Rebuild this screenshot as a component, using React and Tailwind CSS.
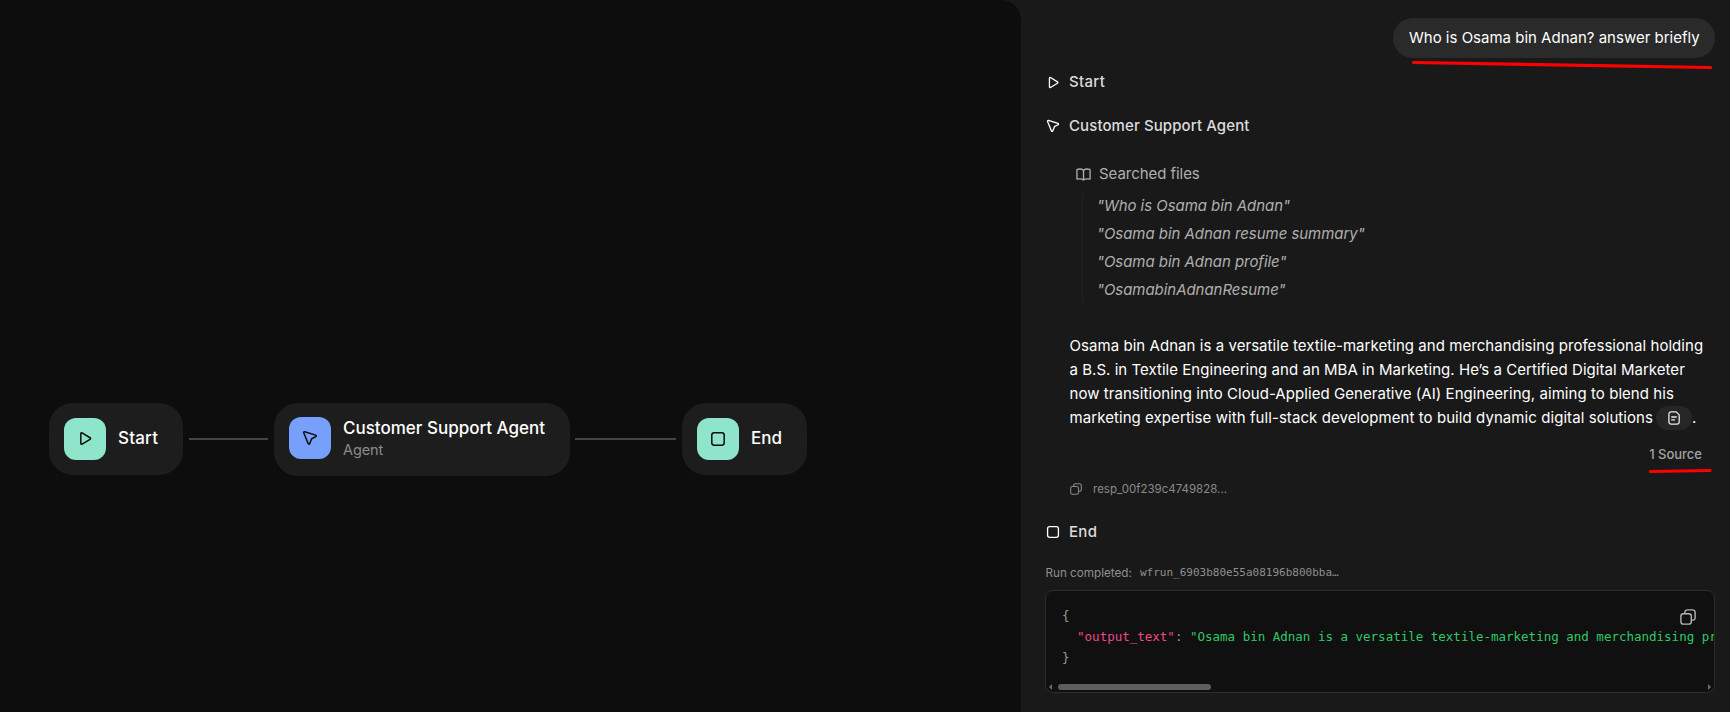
import React from "react";

function PlayIcon({ className }) {
  return (
    <svg viewBox="0 0 16 16" fill="none" stroke="currentColor" strokeWidth="1.6" strokeLinejoin="round" className={className}>
      <path d="M3 2.700v10.600a.9.9 0 0 0 1.300.8l8.600-5.200a1 1 0 0 0 0-1.700l-8.600-5.300a.9.9 0 0 0-1.300.8Z" />
    </svg>
  );
}

function CursorIcon({ className }) {
  return (
    <svg viewBox="0 0 16 16" fill="none" stroke="currentColor" strokeWidth="1.5" strokeLinejoin="round" className={className}>
      <path d="M2.700 1.700l11 3.400a.8.8 0 0 1 .1 1.500L10.100 8.500a1.600 1.600 0 0 0-.7.8l-1.700 4.300a.8.8 0 0 1-1.500 0L1.700 2.700a.8.8 0 0 1 1-1Z" />
    </svg>
  );
}

function SquareIcon({ className }) {
  return (
    <svg viewBox="0 0 16 16" fill="none" stroke="currentColor" strokeWidth="1.5" className={className}>
      <rect x="1.8" y="1.8" width="12.4" height="12.4" rx="2.4" />
    </svg>
  );
}

function BookIcon({ className }) {
  return (
    <svg viewBox="0 0 16 16" fill="none" stroke="currentColor" strokeWidth="1.4" strokeLinejoin="round" className={className}>
      <path d="M8 3.4C6.2 2.1 3.6 1.9 1.4 2.5c-.2.1-.4.3-.4.5v9.5c0 .4.3.6.7.5 2.1-.5 4.6-.3 6.3.9 1.700-1.200 4.200-1.400 6.300-.9.4.1.7-.1.7-.5V3c0-.2-.2-.4-.4-.5C12.400 1.900 9.800 2.100 8 3.400Z" />
      <path d="M8 3.400v10.500" />
    </svg>
  );
}

function CopyIcon({ className }) {
  return (
    <svg viewBox="0 0 16 16" fill="none" stroke="currentColor" strokeWidth="1.4" className={className}>
      <rect x="0.9" y="4.700" width="10.400" height="10.400" rx="2.400" />
      <path d="M4.900 4.500V3.300a2.400 2.400 0 0 1 2.400-2.400h5.400a2.400 2.400 0 0 1 2.400 2.400v5.400a2.400 2.400 0 0 1-2.400 2.400h-1.200" />
    </svg>
  );
}

function FileIcon({ className }) {
  return (
    <svg viewBox="0 0 12 14" fill="none" stroke="currentColor" strokeWidth="1.300" strokeLinecap="round" strokeLinejoin="round" className={className}>
      <path d="M3 .9h5.200L11.200 3.900V11a2.100 2.100 0 0 1-2.100 2.100H3A2.100 2.100 0 0 1 .9 11V3A2.100 2.100 0 0 1 3 .9Z" />
      <path d="M3.700 6h4.600M3.700 8.900h2.800" />
    </svg>
  );
}

function Node({ tone, icon, title, subtitle, className }) {
  return (
    <div className={`flex shrink-0 items-center rounded-[24px] bg-[#1d1d1d] pl-[15px] ${className}`}>
      <div className={`flex size-[42px] shrink-0 items-center justify-center rounded-[12px] text-[#0d0d0d] ${tone}`}>{icon}</div>
      <div className="ml-3 flex flex-col whitespace-nowrap">
        <span className="text-[17px] leading-[23px] font-medium text-white">{title}</span>
        {subtitle && <span className="text-[14.5px] leading-[20px] tracking-[-0.1px] text-[#8a8a8a]">{subtitle}</span>}
      </div>
    </div>
  );
}

function Edge({ className }) {
  return <div className={`mt-[35px] h-[2px] shrink-0 bg-[#444444] ${className}`} />;
}

function Step({ icon, label, className }) {
  return (
    <div className={`flex h-6 items-center gap-2 text-[15px] font-medium text-[#dcdcdc] ${className}`}>
      <span className="flex size-4 items-center justify-center text-white">{icon}</span>
      {label}
    </div>
  );
}

const queries = [
  "Who is Osama bin Adnan",
  "Osama bin Adnan resume summary",
  "Osama bin Adnan profile",
  "OsamabinAdnanResume",
];

export default function App() {
  return (
    <div className="relative flex h-[712px] w-[1730px] overflow-hidden bg-[#191919] font-['Inter',sans-serif]">
      <main className="flex w-[1021px] shrink-0 items-start rounded-tr-[20px] bg-[#0d0d0d] pt-[403px] pl-[49px]">
        <Node className="h-[72px] w-[134px] pb-px" tone="bg-[#8ee5c9]" icon={<PlayIcon className="size-[15px]" />} title={<span className="tracking-[0.2px]">Start</span>} />
        <Edge className="ml-[6px] w-[79px]" />
        <Node className="h-[73px] w-[296px] ml-[6px] pb-[3px]" tone="bg-[#76a0fb]" icon={<CursorIcon className="size-4" />} title="Customer Support Agent" subtitle="Agent" />
        <Edge className="ml-[5px] w-[101px]" />
        <Node className="ml-[6px] h-[72px] w-[125px] pb-px" tone="bg-[#8ee5c9]" icon={<SquareIcon className="size-4" />} title="End" />
      </main>

      <aside className="flex min-w-0 flex-1 flex-col pt-[18px] pr-[15px] pl-6">
        <div className="flex h-10 w-[322px] items-center self-end rounded-full bg-[#2a2a2a] px-4 text-[15px] whitespace-nowrap text-white">
          Who is Osama bin Adnan? answer briefly
        </div>

        <Step className="mt-3 tracking-[0.3px]" icon={<PlayIcon className="size-[13px]" />} label="Start" />
        <Step className="mt-5 tracking-[0.1px]" icon={<CursorIcon className="size-[14px]" />} label="Customer Support Agent" />

        <div className="mt-6 ml-[31px] flex h-6 items-center gap-2 text-[15px] tracking-[-0.05px] text-[#afafaf]">
          <BookIcon className="size-[15px]" />
          Searched files
        </div>
        <ul className="mt-2 ml-[37px] flex h-[108px] flex-col border-l border-[#222222] pl-[14px] text-[15px] tracking-[-0.05px] text-[#afafaf] italic">
          {queries.map((q) => (
            <li key={q} className="-mt-[2px] mb-[2px] h-7 shrink-0 leading-7 whitespace-nowrap">"{q}"</li>
          ))}
        </ul>

        <p className="mt-8 ml-[24.5px] text-[15px] leading-6 tracking-[0.055px] whitespace-nowrap text-white">
          Osama bin Adnan is a versatile textile-marketing and merchandising professional holding
          <br />
          <span className="tracking-[0.035px]">a B.S. in Textile Engineering and an MBA in Marketing. He’s a Certified Digital Marketer</span>
          <br />
          now transitioning into Cloud-Applied Generative (AI) Engineering, aiming to blend his
          <br />
          <span className="flex h-6 items-center tracking-[0.072px]">
            marketing expertise with full-stack development to build dynamic digital solutions
            <span className="ml-[3px] inline-flex h-6 w-9 items-center justify-center rounded-full bg-[#262626] text-[#e8e8e8]">
              <FileIcon className="h-[14px] w-3" />
            </span>
            .
          </span>
        </p>

        <div className="mt-3 mr-[13px] self-end text-[13px] leading-6 font-medium text-[#a3a3a3]">1 Source</div>

        <div className="mt-[11px] ml-[25px] flex h-6 items-center gap-[11px] text-[11.5px] text-[#8a8a8a]">
          <CopyIcon className="size-3" />
          <span className="pt-px">resp_00f239c4749828...</span>
        </div>

        <Step className="mt-[19px] tracking-[0.3px]" icon={<SquareIcon className="size-[14px]" />} label="End" />

        <div className="mt-[17px] flex h-6 items-center pt-px text-[11.7px] whitespace-nowrap text-[#8f8f8f]">
          <span className="w-[95px] pl-[0.5px]">Run completed:</span>
          <span className="font-['DejaVu_Sans_Mono',monospace] text-[11px]">wfrun_6903b80e55a08196b800bba…</span>
        </div>

        <div className="relative mt-[5px] flex h-[103px] flex-col overflow-hidden rounded-lg border border-[#2e2e2e] bg-[#101010]">
          <pre className="mt-[14px] ml-[16px] font-['DejaVu_Sans_Mono',monospace] text-[12.5px] leading-[21px] text-[#9a9a8c]">
            {"{\n  "}
            <span className="text-[#f0468c]">"output_text"</span>
            {": "}
            <span className="text-[#2fc867]">"Osama bin Adnan is a versatile textile-marketing and merchandising professional holding a B.S. in Textile Engineering"</span>
            {"\n}"}
          </pre>
          <div className="mt-4 flex items-center justify-between px-[3px]">
            <div className="flex items-center gap-[6px]">
              <svg viewBox="0 0 3 6" className="h-[6px] w-[3px] fill-[#6b6b6b]"><path d="M3 0v6L0 3Z" /></svg>
              <div className="h-[6px] w-[153px] rounded-full bg-[#5e5e5e]" />
            </div>
            <svg viewBox="0 0 3 6" className="h-[6px] w-[3px] fill-[#6b6b6b]"><path d="M0 0v6L3 3Z" /></svg>
          </div>
          <CopyIcon className="absolute top-[18px] right-[18px] size-4 text-[#b4b4b4]" />
        </div>
      </aside>

      <svg viewBox="0 0 1730 712" fill="none" stroke="#ff0000" strokeWidth="3.2" strokeLinecap="round" className="pointer-events-none absolute inset-0 h-[712px] w-[1730px]">
        <path d="M1413.500 62.500L1710.500 67.500" />
        <path d="M1650.500 471.500L1710 470.500" />
      </svg>
    </div>
  );
}
